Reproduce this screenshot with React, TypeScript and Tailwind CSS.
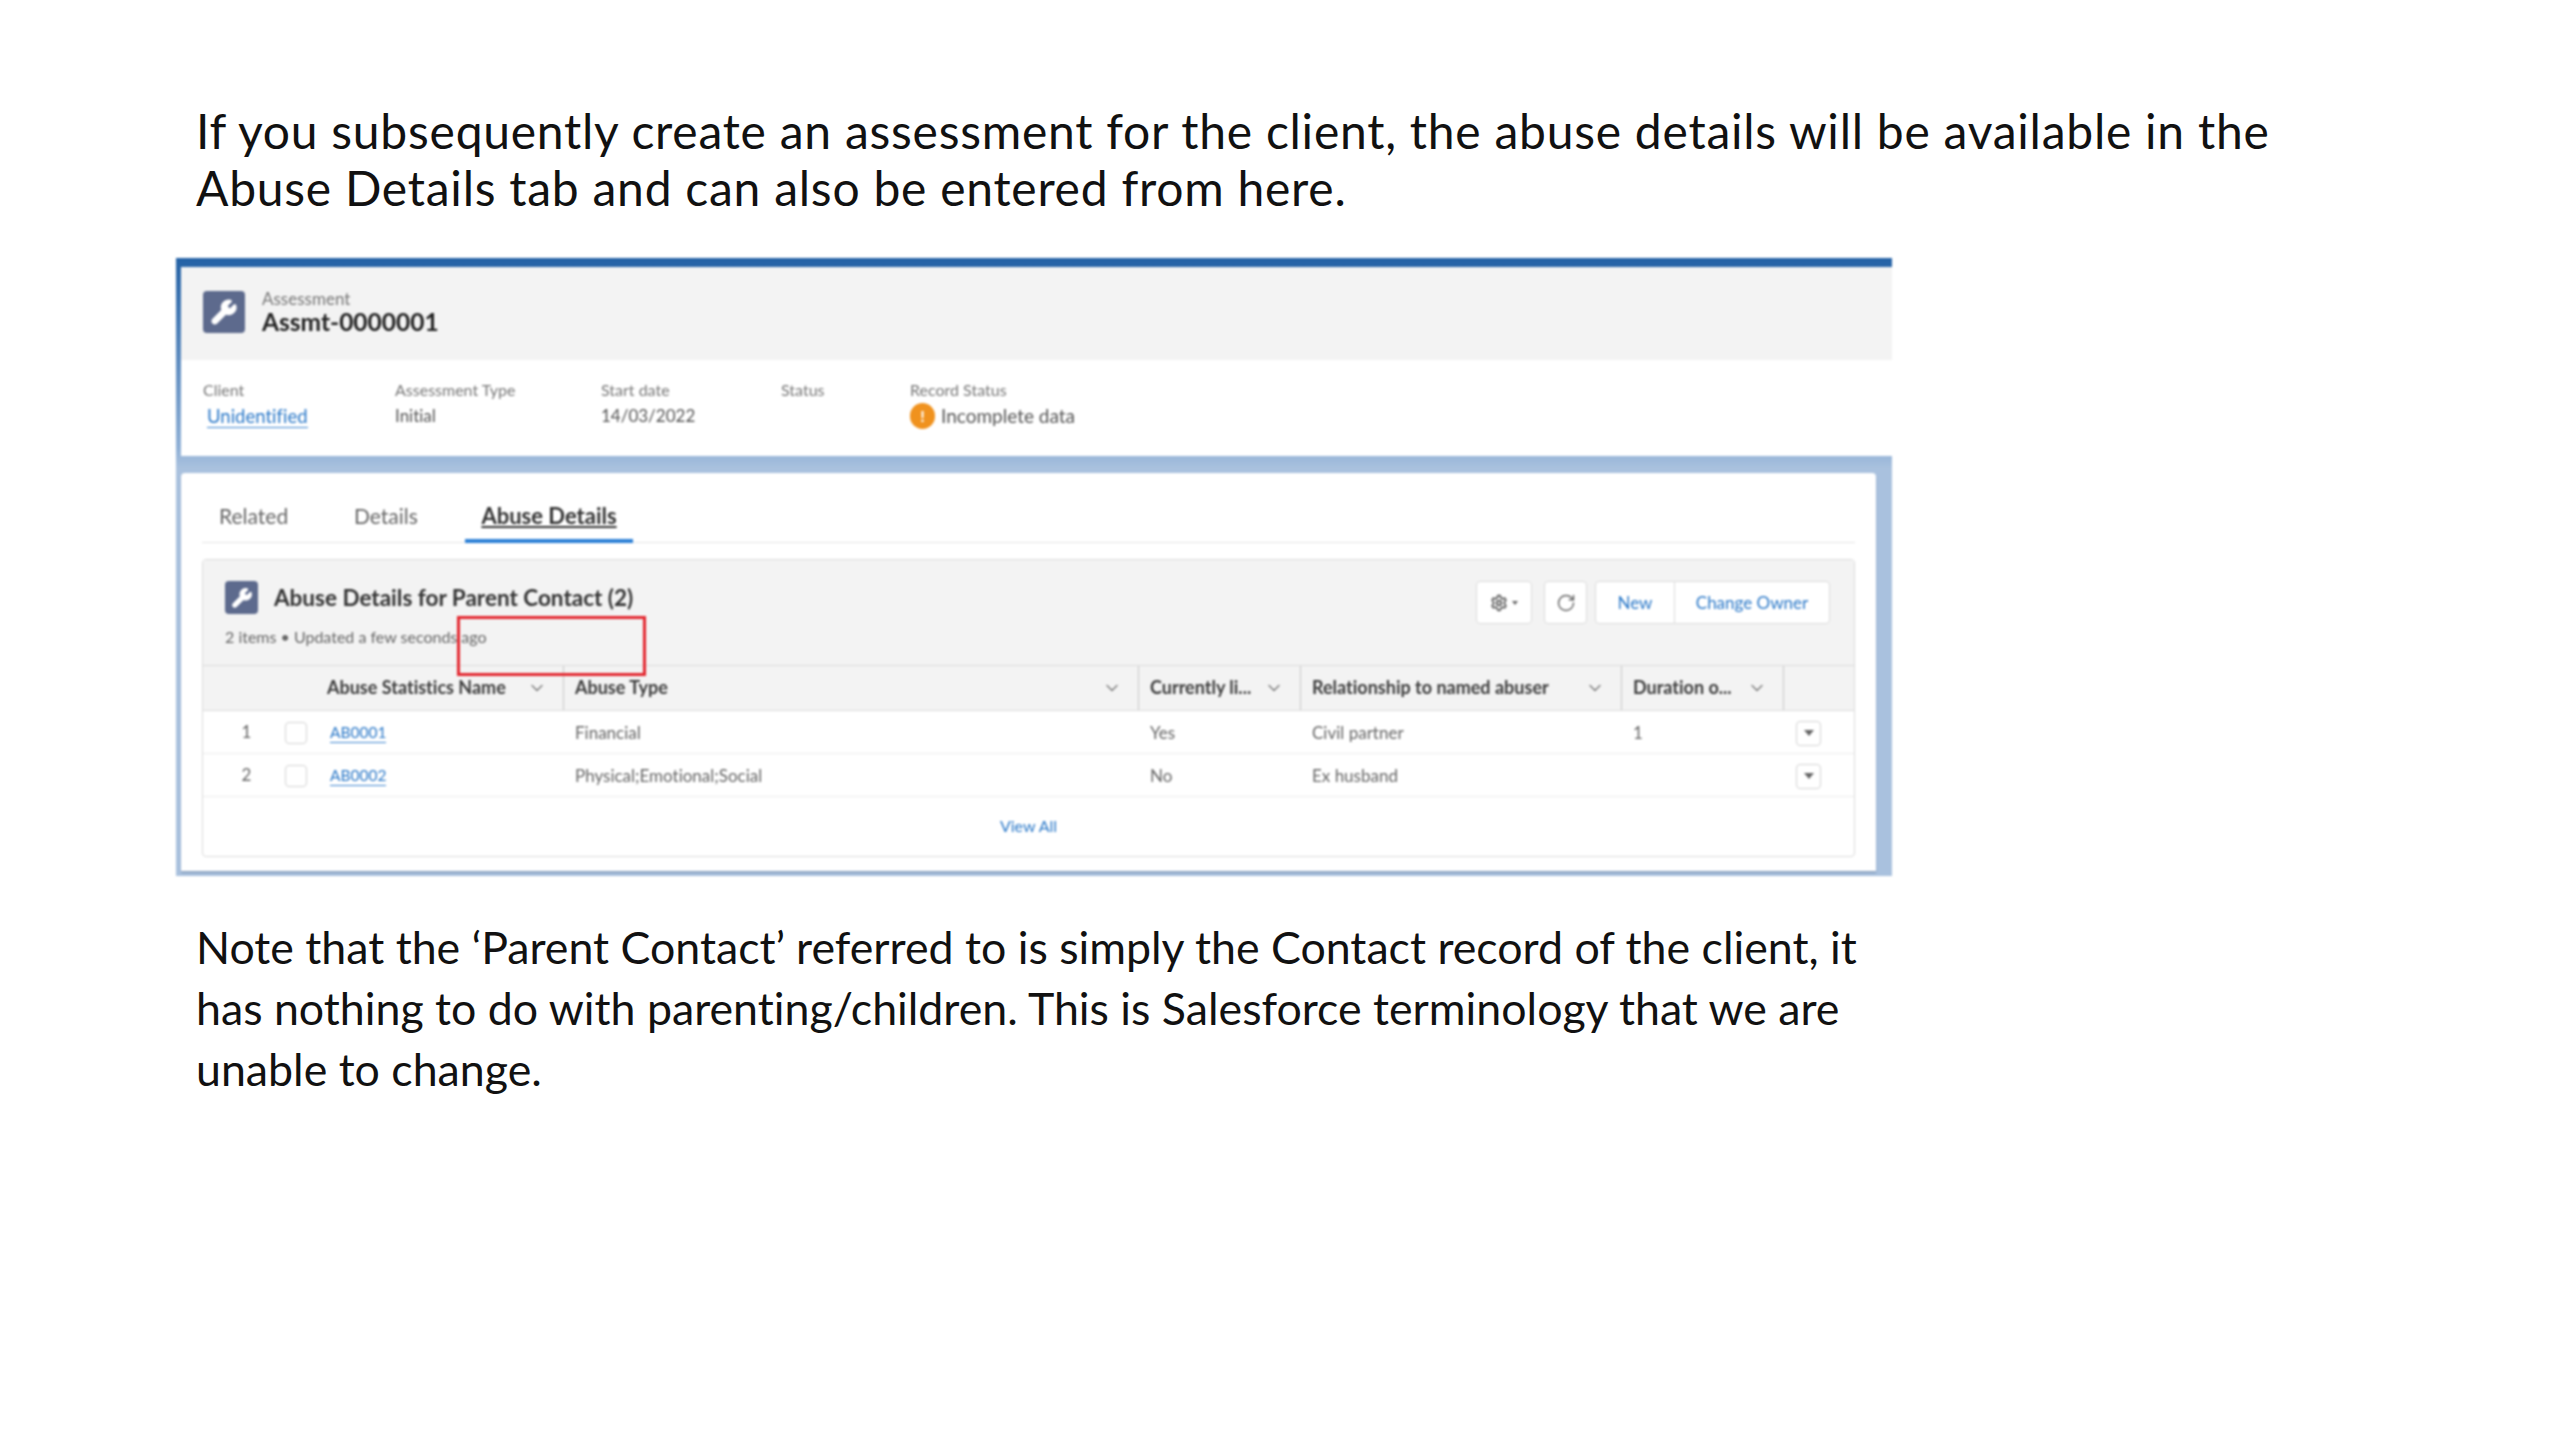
import { ChevronDown, RotateCw, Settings, Wrench } from 'lucide-react';

const columns = 'grid grid-cols-[361px_575px_162px_321px_162px_69px]';

const rows = [
  { no: '1', name: 'AB0001', type: 'Financial', living: 'Yes', relation: 'Civil partner', duration: '1' },
  { no: '2', name: 'AB0002', type: 'Physical;Emotional;Social', living: 'No', relation: 'Ex husband', duration: '' },
];

function RecordIcon({ box, icon }: { box: string; icon: string }) {
  return (
    <div className={`flex shrink-0 items-center justify-center rounded bg-[#5d6a8d] ${box}`}>
      <Wrench className={`fill-white text-white ${icon}`} strokeWidth={1.5} />
    </div>
  );
}

function Field({ label, className, children }: { label: string; className: string; children?: React.ReactNode }) {
  return (
    <div className={className}>
      <div className="h-[26px] text-[16px] leading-[26px] text-[#777]">{label}</div>
      <div className="h-[26px] text-[17px] leading-[26px] text-[#555]">{children}</div>
    </div>
  );
}

function HeaderCell({ label, className }: { label: string; className: string }) {
  return (
    <div className={`flex h-full items-center border-r border-[#c9c9c9] pr-[16px] ${className}`}>
      <span className="-mt-[2px] text-[18px] font-bold whitespace-nowrap text-[#3c3c3c]">{label}</span>
      <ChevronDown className="ml-auto h-5 w-5 text-[#777]" strokeWidth={1.5} />
    </div>
  );
}

export default function App() {
  return (
    <div className="h-[1440px] w-[2560px] overflow-hidden bg-white pt-[102px] pl-[176px] font-['Lato','Open_Sans',sans-serif] text-black [font-variant-ligatures:none]">
      <p className="w-[2200px] pl-[20px] text-[48px] leading-[57px] tracking-[0.75px] text-[#111]">
        If you subsequently create an assessment for the client, the abuse details will be available in the
        <br />
        Abuse Details tab and can also be entered from here.
      </p>

      <div className="relative mt-[42px] h-[618px] w-[1716px] bg-[linear-gradient(to_bottom,#2462a6_0px,#2a66a8_10px,#8fb0d6_190px,#a9c1de_210px,#a9c1de_100%)] pt-[9px] pl-[5px] blur-[0.8px]">
        <div className="flex h-[93px] items-center bg-[#f3f3f3] pl-[22px]">
          <RecordIcon box="-mt-[3px] h-[42px] w-[42px]" icon="h-7 w-7" />
          <div className="ml-[17px] -mt-[4px]">
            <div className="text-[17px] leading-[20px] text-[#777]">Assessment</div>
            <div className="text-[24.5px] leading-[26px] font-bold text-[#222]">Assmt-0000001</div>
          </div>
        </div>

        <div className="flex h-[96px] bg-white pt-[17px] pl-[22px]">
          <Field label="Client" className="w-[192px]">
            <span className="ml-[4px] border-b border-[#3d85d0] text-[18.5px] text-[#2a78c8]">Unidentified</span>
          </Field>
          <Field label="Assessment Type" className="w-[206px]">Initial</Field>
          <Field label="Start date" className="w-[180px]">14/03/2022</Field>
          <Field label="Status" className="w-[129px]" />
          <Field label="Record Status" className="w-[300px]">
            <span className="flex items-center gap-[6px] text-[19px]">
              <span className="flex h-[26px] w-[25px] items-center justify-center rounded-full bg-[#f0921e] text-[16px] font-bold text-white">!</span>
              Incomplete data
            </span>
          </Field>
        </div>

        <div className="mt-[17px] mr-[16px] h-[398px] rounded-t bg-white px-[21px] pt-[24px] shadow-[0_2px_2px_#8ca3c0]">
          <div className="flex h-[46px] border-b border-[#e4e4e4] pl-[17px] text-[21px] leading-[38px]">
            <span className="w-[135px] text-[#666]">Related</span>
            <span className="w-[111px] text-[#666]">Details</span>
            <span className="h-[46px] w-[168px] border-b-[4px] border-[#2b7fd6] text-center text-[22px] font-bold text-[#333] underline">
              Abuse Details
            </span>
          </div>

          <div className="mt-[16px] h-[298px] overflow-hidden rounded border border-[#dcdcdc]">
            <div className="relative flex h-[105px] justify-between bg-[#f3f3f3] pt-[21px] pr-[24px] pl-[22px]">
              <div>
                <div className="flex items-center gap-[16px]">
                  <RecordIcon box="h-[33px] w-[33px]" icon="h-[22px] w-[22px]" />
                  <span className="text-[22.5px] font-bold text-[#333]">Abuse Details for Parent Contact (2)</span>
                </div>
                <div className="mt-[10px] text-[16px] text-[#666]">2 items • Updated a few seconds ago</div>
              </div>
              <div className="flex h-[43px] text-[17px] text-[#2a78c8]">
                <div className="flex w-[56px] items-center justify-center gap-[4px] rounded border border-[#dcdcdc] bg-white">
                  <Settings className="h-[18px] w-[18px] text-[#666]" strokeWidth={2.5} />
                  <span className="h-0 w-0 border-x-[3px] border-t-[4px] border-x-transparent border-t-[#666]" />
                </div>
                <div className="ml-[12px] flex w-[43px] items-center justify-center rounded border border-[#dcdcdc] bg-white">
                  <RotateCw className="h-[20px] w-[20px] text-[#666]" strokeWidth={1.75} />
                </div>
                <div className="ml-[8px] flex w-[80px] items-center justify-center rounded-l border border-[#dcdcdc] bg-white">New</div>
                <div className="-ml-px flex w-[156px] items-center justify-center rounded-r border border-[#dcdcdc] bg-white">Change Owner</div>
              </div>
              <div className="absolute top-[56px] left-[254px] h-[60px] w-[189px] border-[3px] border-[#e3262e]" />
            </div>

            <div className={`${columns} h-[46px] items-center border-y border-[#dcdcdc] bg-[#f3f3f3]`}>
              <HeaderCell label="Abuse Statistics Name" className="pl-[124px]" />
              <HeaderCell label="Abuse Type" className="pl-[11px]" />
              <HeaderCell label="Currently li..." className="pl-[11px]" />
              <HeaderCell label="Relationship to named abuser" className="pl-[11px]" />
              <HeaderCell label="Duration o..." className="pl-[11px]" />
              <div />
            </div>

            {rows.map((row) => (
              <div key={row.no} className={`${columns} h-[43px] items-center border-b border-[#ececec] pt-[2px] text-[17px] text-[#666]`}>
                <div className="flex items-center">
                  <span className="w-[86px] -translate-y-[1px] pl-[1px] text-center">{row.no}</span>
                  <span className="-ml-[4px] h-[22px] w-[22px] rounded border border-[#d4d4d4] bg-white" />
                  <span className="ml-[23px] border-b border-[#3d85d0] text-[15.5px] leading-[19px] text-[#2a78c8]">{row.name}</span>
                </div>
                <div className="pl-[11px]">{row.type}</div>
                <div className="pl-[11px]">{row.living}</div>
                <div className="pl-[11px]">{row.relation}</div>
                <div className="pl-[11px]">{row.duration}</div>
                <div className="pl-[12px]">
                  <div className="flex h-[25px] w-[25px] items-center justify-center rounded border border-[#d4d4d4]">
                    <span className="h-0 w-0 border-x-[5px] border-t-[6px] border-x-transparent border-t-[#666]" />
                  </div>
                </div>
              </div>
            ))}

            <div className="pt-[17px] text-center text-[16px] text-[#2a78c8]">View All</div>
          </div>
        </div>
      </div>

      <p className="mt-[41px] w-[1900px] pl-[20px] text-[44.7px] leading-[61px] text-[#111]">
        Note that the ‘Parent Contact’ referred to is simply the Contact record of the client, it
        <br />
        has nothing to do with parenting/children. This is Salesforce terminology that we are
        <br />
        unable to change.
      </p>
    </div>
  );
}
